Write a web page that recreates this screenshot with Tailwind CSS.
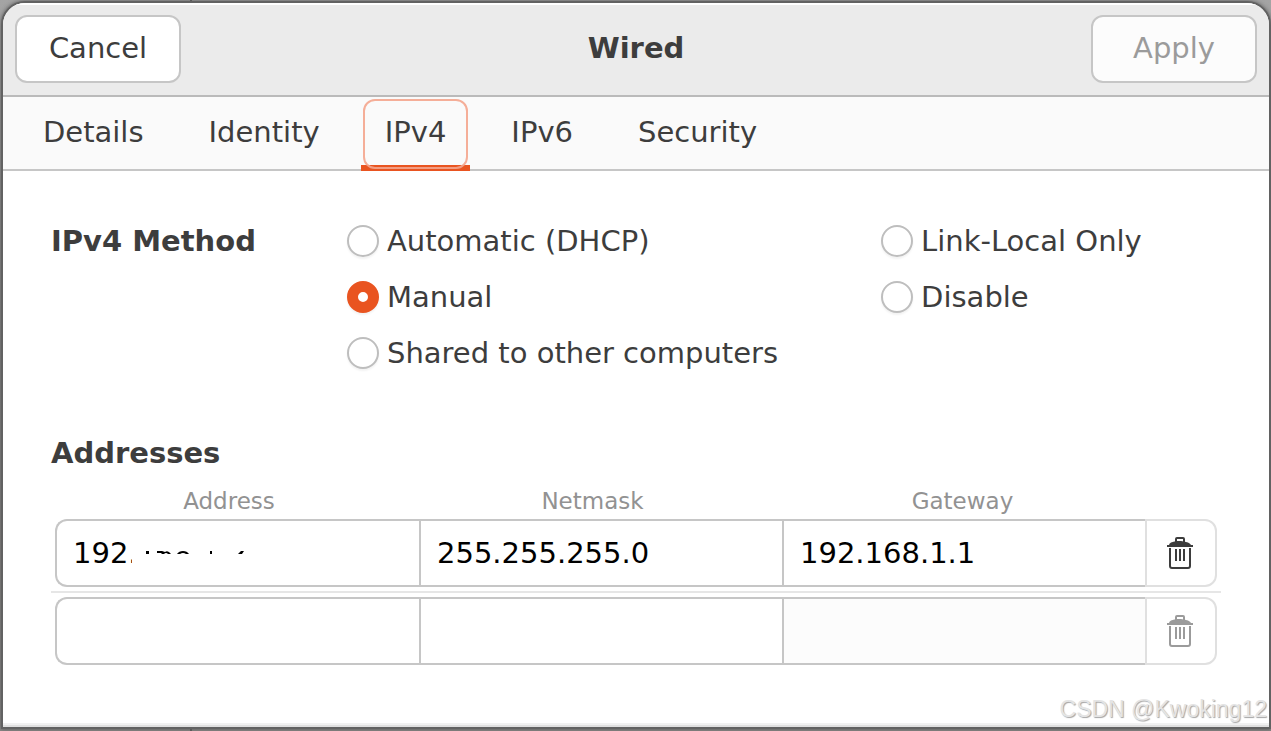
<!DOCTYPE html>
<html lang="en">
<head>
    <meta charset="UTF-8">
    <meta name="viewport" content="width=device-width, initial-scale=1.0">
    <title>Wired</title>
    <script src="https://cdn.jsdelivr.net/npm/@tailwindcss/browser@4"></script>
</head>
<body class="relative isolate flex min-h-screen bg-linear-to-b from-[#a4a4a4] via-[#828282] to-[#8a8887] pt-px pl-px pb-0.5 font-['DejaVu_Sans',sans-serif] text-[29px] leading-8 text-[#3d3d3d]">
    <!-- window behind the dialog -->
    <div class="absolute inset-y-0 left-[190px] -z-10 w-0.5 bg-[#5e5e5e]"></div>

    <div class="flex min-w-0 flex-1 flex-col overflow-hidden rounded-t-3xl border-2 border-[#626262] bg-white shadow-[0_0_4px_#555]">
        <header class="flex items-center justify-between border-b-2 border-[#bababa] bg-[#ebebeb] p-3 shadow-[inset_0_2px_#fff]">
            <button class="w-[166px] rounded-xl border-2 border-[#c6c6c6] bg-white pt-[15px] pb-[17px]">Cancel</button>
            <h1 class="pb-0.5 font-bold">Wired</h1>
            <button class="w-[166px] rounded-xl border-2 border-[#c6c6c6] bg-[#fcfcfc] pt-[15px] pb-[17px] text-[#9b9b9b]" disabled>Apply</button>
        </header>

        <nav class="flex gap-[17px] border-b-2 border-[#c6c6c6] bg-[#fafafa] px-4">
            <button class="-mb-0.5 h-[74px] px-6 pb-1">Details</button>
            <button class="-mb-0.5 h-[74px] px-6 pb-1">Identity</button>
            <button class="relative -mb-0.5 h-[74px] px-6 pb-1 shadow-[inset_0_-6px_#e95420]">
                IPv4
                <span class="absolute inset-0.5 rounded-xl border-2 border-[#f4a58d]/90"></span>
            </button>
            <button class="-mb-0.5 h-[74px] px-6 pb-1">IPv6</button>
            <button class="-mb-0.5 h-[74px] px-6 pb-1">Security</button>
        </nav>

        <main class="flex-1 px-12 pt-[54px] pb-14 shadow-[inset_0_-2px_#e0e0e0,inset_0_-4px_#f1f1f1]">
            <div role="radiogroup" aria-labelledby="method" class="flex">
                <h2 id="method" class="w-[296px] font-bold">IPv4 Method</h2>
                <div class="grid flex-1 grid-cols-[11fr_7fr] gap-y-6">
                    <label class="flex items-center gap-2">
                        <input type="radio" name="method" class="size-8 appearance-none rounded-full border-2 border-[#bebebe] bg-white shadow-[0_2px_2px_#0000000d] checked:border-[11px] checked:border-[#e95420]">
                        Automatic (DHCP)
                    </label>
                    <label class="flex items-center gap-2">
                        <input type="radio" name="method" class="size-8 appearance-none rounded-full border-2 border-[#bebebe] bg-white shadow-[0_2px_2px_#0000000d] checked:border-[11px] checked:border-[#e95420]">
                        Link-Local Only
                    </label>
                    <label class="flex items-center gap-2">
                        <input type="radio" name="method" checked class="size-8 appearance-none rounded-full border-2 border-[#bebebe] bg-white shadow-[0_2px_2px_#0000000d] checked:border-[11px] checked:border-[#e95420]">
                        Manual
                    </label>
                    <label class="flex items-center gap-2">
                        <input type="radio" name="method" class="size-8 appearance-none rounded-full border-2 border-[#bebebe] bg-white shadow-[0_2px_2px_#0000000d] checked:border-[11px] checked:border-[#e95420]">
                        Disable
                    </label>
                    <label class="flex items-center gap-2">
                        <input type="radio" name="method" class="size-8 appearance-none rounded-full border-2 border-[#bebebe] bg-white shadow-[0_2px_2px_#0000000d] checked:border-[11px] checked:border-[#e95420]">
                        Shared to other computers
                    </label>
                </div>
            </div>

            <h2 id="addresses" class="mt-[68px] font-bold">Addresses</h2>
            <table aria-labelledby="addresses" class="mt-[18px] w-full table-fixed border-separate border-spacing-0">
                <colgroup>
                    <col class="w-[368px]">
                    <col>
                    <col>
                    <col class="w-[76px]">
                </colgroup>
                <thead class="text-[23px] leading-7 text-[#929292]">
                    <tr>
                        <th class="p-0 pr-3 font-normal">Address</th>
                        <th class="p-0 pr-4 font-normal">Netmask</th>
                        <th class="p-0 pr-0.5 font-normal">Gateway</th>
                        <td></td>
                    </tr>
                </thead>
                <tbody>
                    <tr>
                        <td class="relative border-b-2 border-[#e6e6e6] py-1 pr-0 pl-1">
                            <input type="text" aria-label="Address" value="192." class="block h-[68px] w-full rounded-l-xl border-2 border-r-0 border-[#c6c6c6] bg-white px-4 text-black">
                            <!-- erased part of the address -->
                            <svg class="absolute top-8 left-[79px]" width="130" height="20" viewBox="0 0 130 20">
                                <path d="M2 6h20v12H2z" fill="#fff" />
                                <path d="M16 4h3v3h-3zM80 4h2v3h-2z" fill="#000" />
                                <path d="M27 4h5l3 1q3-2 6 2h-3q-2-2-4 0h-2l-1-1h-4zM47 7q2-3 6-3t6 3h-3q-3-2-6 0zM108 7l3-3h3l-2 3z" fill="#000" />
                            </svg>
                        </td>
                        <td class="border-b-2 border-[#e6e6e6] px-0 py-1">
                            <input type="text" aria-label="Netmask" value="255.255.255.0" class="block h-[68px] w-full border-2 border-r-0 border-[#c6c6c6] bg-white px-4 text-black">
                        </td>
                        <td class="border-b-2 border-[#e6e6e6] px-0 py-1">
                            <input type="text" aria-label="Gateway" value="192.168.1.1" class="block h-[68px] w-full border-2 border-r-0 border-[#c6c6c6] bg-white px-4 text-black">
                        </td>
                        <td class="border-b-2 border-[#e6e6e6] py-1 pr-1 pl-0">
                            <button aria-label="Remove" class="flex h-[68px] w-full items-center justify-center rounded-r-xl border-2 border-[#e0e0e0] pr-0.5 text-[#3d3d3d]">
                                <svg width="32" height="32" viewBox="0 0 32 32" fill="currentColor">
                                    <path d="M12 5V2q0-1 1-1h6q1 0 1 1v3" fill="none" stroke="currentColor" stroke-width="2" />
                                    <path d="M3 10V8h2q0-3 8-4h4q9 1 10 4h2v2z" />
                                    <path d="M6 11v18q0 2 2 2h16q2 0 2-2V11" fill="none" stroke="currentColor" stroke-width="2" />
                                    <path d="M11 12h2v12h-2zM15 12h2v12h-2zM19 12h2v12h-2z" />
                                </svg>
                            </button>
                        </td>
                    </tr>
                    <tr>
                        <td class="py-1 pr-0 pl-1">
                            <input type="text" aria-label="Address" class="block h-[68px] w-full rounded-l-xl border-2 border-r-0 border-[#c6c6c6] bg-white px-4 text-black">
                        </td>
                        <td class="px-0 py-1">
                            <input type="text" aria-label="Netmask" class="block h-[68px] w-full border-2 border-r-0 border-[#c6c6c6] bg-white px-4 text-black">
                        </td>
                        <td class="px-0 py-1">
                            <input type="text" aria-label="Gateway" disabled class="block h-[68px] w-full border-2 border-r-0 border-[#c6c6c6] bg-[#fcfcfc] px-4 text-black">
                        </td>
                        <td class="py-1 pr-1 pl-0">
                            <button aria-label="Remove" disabled class="flex h-[68px] w-full items-center justify-center rounded-r-xl border-2 border-[#e0e0e0] pr-0.5 text-[#9b9b9b]">
                                <svg width="32" height="32" viewBox="0 0 32 32" fill="currentColor">
                                    <path d="M12 5V2q0-1 1-1h6q1 0 1 1v3" fill="none" stroke="currentColor" stroke-width="2" />
                                    <path d="M3 10V8h2q0-3 8-4h4q9 1 10 4h2v2z" />
                                    <path d="M6 11v18q0 2 2 2h16q2 0 2-2V11" fill="none" stroke="currentColor" stroke-width="2" />
                                    <path d="M11 12h2v12h-2zM15 12h2v12h-2zM19 12h2v12h-2z" />
                                </svg>
                            </button>
                        </td>
                    </tr>
                </tbody>
            </table>
        </main>
    </div>

    <p class="absolute right-1 bottom-1.5 font-['Liberation_Sans',sans-serif] text-[23px] text-[#e4e4e4] [text-shadow:1px_1px_1px_#a4a4a4]">CSDN @Kwoking12</p>
</body>
</html>
